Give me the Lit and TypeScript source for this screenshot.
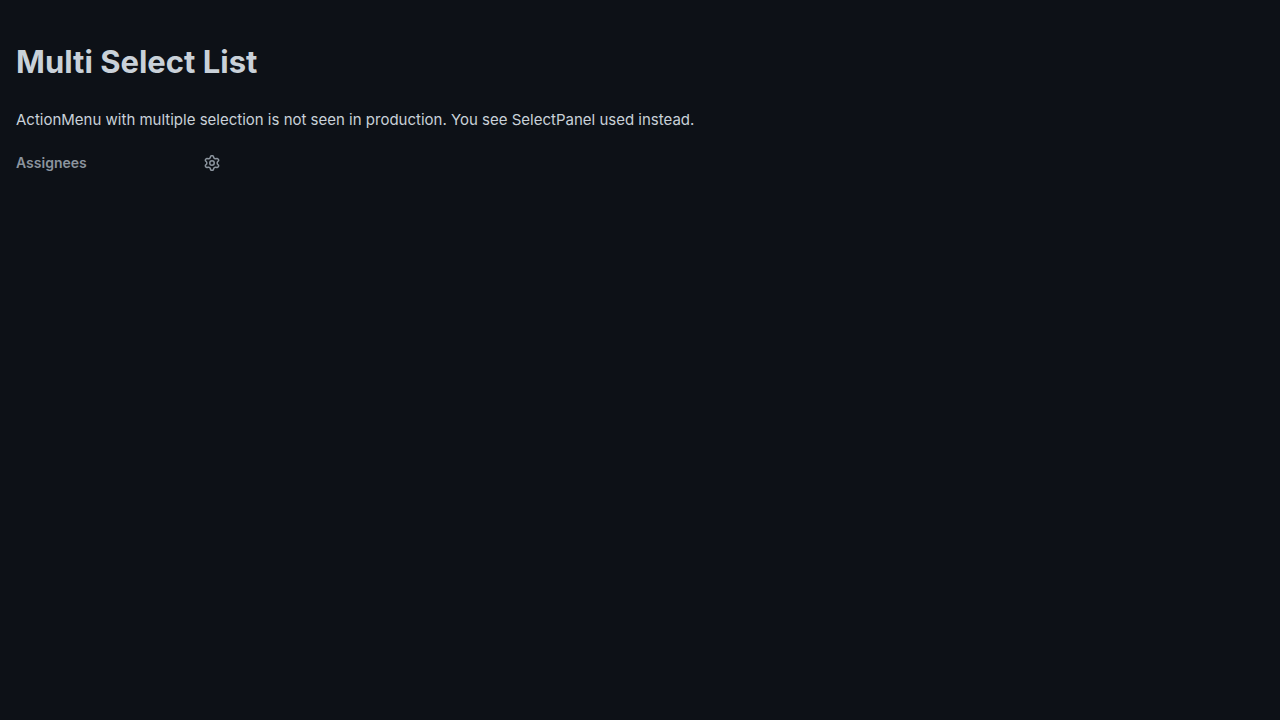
import { LitElement, html, css } from "lit";
import { customElement } from "lit/decorators.js";

@customElement("app-root")
export class AppRoot extends LitElement {
  static styles = css`
    :host {
      display: block;
      box-sizing: border-box;
      min-height: 100vh;
      padding: 40px 16px;
      background: #0d1117;
      color: #c9d1d9;
      font-family: Inter, "Noto Sans", sans-serif;
      font-size: 15px;
      line-height: 24px;
    }
    .title {
      margin: 0;
      font-size: 31px;
      line-height: 44px;
      font-weight: 700;
    }
    .description {
      margin: 24px 0 0;
    }
    .assignees {
      display: flex;
      align-items: center;
      justify-content: space-between;
      max-width: 204px;
      margin-top: 20px;
    }
    .label {
      margin: 0;
      color: #8b949e;
      font-size: 14px;
      line-height: 22px;
      font-weight: 600;
    }
    .settings {
      display: flex;
      margin: 0;
      padding: 0;
      border: 0;
      background: none;
      color: #8b949e;
      cursor: pointer;
    }
    .gear {
      display: block;
      fill: currentColor;
    }
  `;

  render() {
    return html`
      <h1 class="title">Multi Select List</h1>
      <p class="description">
        ActionMenu with multiple selection is not seen in production. You see SelectPanel used instead.
      </p>
      <section class="assignees">
        <h2 class="label">Assignees</h2>
        <button class="settings" type="button" aria-label="Open Assignees menu">
          <svg class="gear" width="16" height="16" viewBox="0 0 16 16" aria-hidden="true">
            <path d="M8 0a8.2 8.2 0 0 1 .701.031C9.444.095 9.99.645 10.16 1.29l.288 1.107c.018.066.079.158.212.224.231.114.454.243.668.386.123.082.233.09.299.071l1.103-.303c.644-.176 1.392.021 1.82.63.27.385.506.792.704 1.218.315.675.111 1.422-.364 1.891l-.814.806c-.049.048-.098.147-.088.294.016.257.016.515 0 .772-.01.147.038.246.088.294l.814.806c.475.469.679 1.216.364 1.891a7.977 7.977 0 0 1-.704 1.217c-.428.61-1.176.807-1.82.63l-1.102-.302c-.067-.019-.177-.011-.3.071a5.909 5.909 0 0 1-.668.386c-.133.066-.194.158-.211.224l-.29 1.106c-.168.646-.715 1.196-1.458 1.26a8.006 8.006 0 0 1-1.402 0c-.743-.064-1.289-.614-1.458-1.26l-.289-1.106c-.018-.066-.079-.158-.212-.224a5.738 5.738 0 0 1-.668-.386c-.123-.082-.233-.09-.299-.071l-1.103.303c-.644.176-1.392-.021-1.82-.63a8.12 8.12 0 0 1-.704-1.218c-.315-.675-.111-1.422.363-1.891l.815-.806c.05-.048.098-.147.088-.294a6.214 6.214 0 0 1 0-.772c.01-.147-.038-.246-.088-.294l-.815-.806C.635 6.045.431 5.298.746 4.623a7.92 7.92 0 0 1 .704-1.217c.428-.61 1.176-.807 1.82-.63l1.102.302c.067.019.177.011.3-.071.214-.143.437-.272.668-.386.133-.066.194-.158.211-.224l.29-1.106C6.009.645 6.556.095 7.299.03 7.53.01 7.764 0 8 0Zm-.571 1.525c-.036.003-.108.036-.137.146l-.289 1.105c-.147.561-.549.967-.998 1.189-.173.086-.34.183-.5.29-.417.278-.97.423-1.529.27l-1.103-.303c-.109-.03-.175.016-.195.045-.22.312-.412.644-.573.99-.014.031-.021.11.059.19l.815.806c.411.406.562.957.53 1.456a4.709 4.709 0 0 0 0 .582c.032.499-.119 1.05-.53 1.456l-.815.806c-.081.08-.073.159-.059.19.162.346.353.677.573.989.02.03.085.076.195.046l1.102-.303c.56-.153 1.113-.008 1.53.27.161.107.328.204.501.29.447.222.85.629.997 1.189l.289 1.105c.029.109.101.143.137.146a6.6 6.6 0 0 0 1.142 0c.036-.003.108-.036.137-.146l.289-1.105c.147-.561.549-.967.998-1.189.173-.086.34-.183.5-.29.417-.278.97-.423 1.529-.27l1.103.303c.109.029.175-.016.195-.045.22-.313.411-.644.573-.99.014-.031.021-.11-.059-.19l-.815-.806c-.411-.406-.562-.957-.53-1.456a4.709 4.709 0 0 0 0-.582c-.032-.499.119-1.05.53-1.456l.815-.806c.081-.08.073-.159.059-.19a6.464 6.464 0 0 0-.573-.989c-.02-.03-.085-.076-.195-.046l-1.102.303c-.56.153-1.113.008-1.53-.27a4.44 4.44 0 0 0-.501-.29c-.447-.222-.85-.629-.997-1.189l-.289-1.105c-.029-.11-.101-.143-.137-.146a6.6 6.6 0 0 0-1.142 0ZM11 8a3 3 0 1 1-6 0 3 3 0 0 1 6 0ZM9.5 8a1.5 1.5 0 1 0-3.001.001A1.5 1.5 0 0 0 9.5 8Z"></path>
          </svg>
        </button>
      </section>
    `;
  }
}
